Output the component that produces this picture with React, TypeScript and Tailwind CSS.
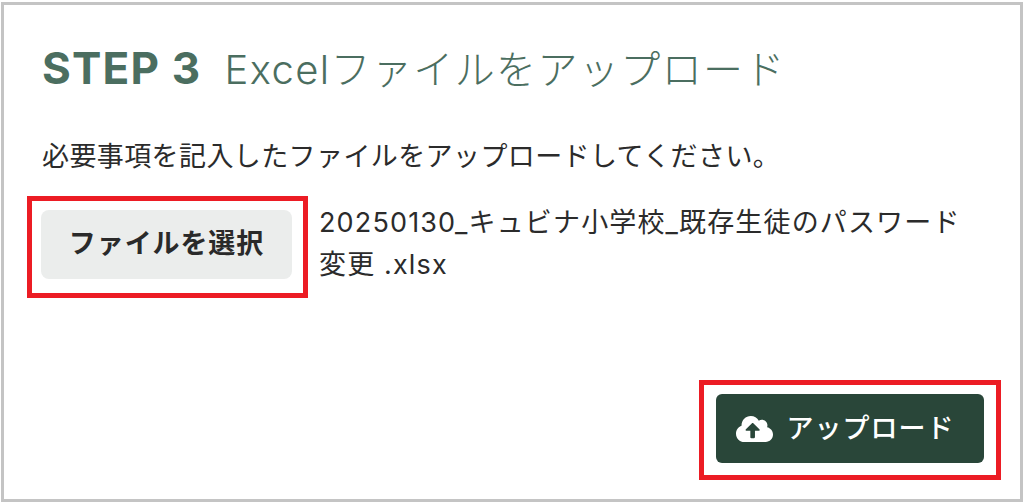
import { FaCloudUploadAlt } from "react-icons/fa"

const font = "font-['Inter','Noto_Sans_CJK_JP',sans-serif]"

export default function App() {
  return (
    <div className={`${font} h-[503px] w-[1024px] overflow-hidden bg-white pt-[2px] pr-[1px] pb-[1px] pl-[1px]`}>
      <div className="flex h-full flex-col border-[3px] border-[#c4c4c4] pt-[36px] pr-[19px] pl-[23px]">
        <h1 className="flex items-baseline pl-[15px] text-[#4b6e60]">
          <span className="text-[44px] leading-[54px] font-bold tracking-[1.2px]">STEP 3</span>
          <span className="ml-[23px] text-[40px] leading-[54px] font-light tracking-[1.4px]">Excelファイルをアップロード</span>
        </h1>
        <p className="mt-[42px] pl-[15px] text-[27px] leading-[36px] tracking-[0.4px] text-[#2b2b2b]">
          必要事項を記入したファイルをアップロードしてください。
        </p>
        <div className="mt-[21px] flex items-start">
          <div className="border-[5px] border-[#ec1c24] pt-[9px] pr-[11px] pb-[14px] pl-[9px]">
            <button className="flex h-[69px] w-[251px] items-center justify-center rounded-[8px] bg-[#ebedec] text-[27px] font-bold tracking-[0.9px] text-[#2a2a2a]">
              ファイルを選択
            </button>
          </div>
          <p className="mt-[6px] ml-[11px] text-[27px] leading-[42px] tracking-[1.15px] text-[#2b2b2b]">
            20250130_キュビナ小学校_既存生徒のパスワード
            <br />
            変更 .xlsx
          </p>
        </div>
        <div className="mt-auto mb-[19px] flex justify-end">
          <div className="border-[5px] border-[#ec1c24] px-[12px] pt-[9px] pb-[12px]">
            <button className="flex h-[69px] w-[268px] items-center justify-center gap-[14px] rounded-[6px] bg-[#294639] pr-[10px] text-[27px] font-medium tracking-[1px] text-white">
              <FaCloudUploadAlt className="h-[30px] w-[37px]" />
              <span className="relative top-[1px]">アップロード</span>
            </button>
          </div>
        </div>
      </div>
    </div>
  )
}
